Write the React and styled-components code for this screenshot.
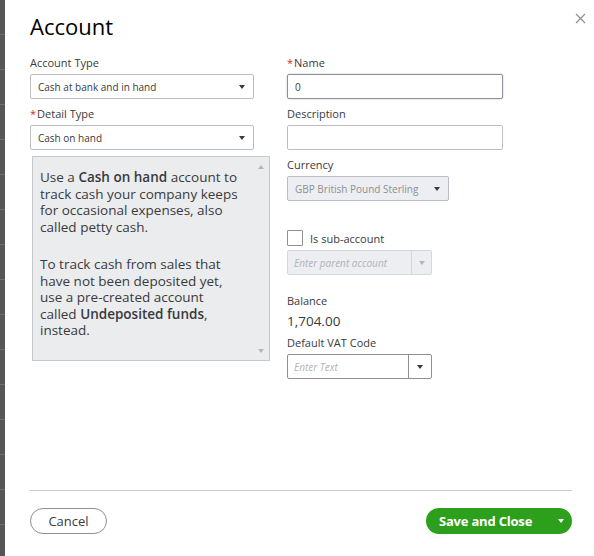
import React from "react";
import styled, { createGlobalStyle } from "styled-components";

const GlobalStyle = createGlobalStyle`
  html, body {
    margin: 0;
    padding: 0;
    background: #ffffff;
  }
  body {
    font-family: "Open Sans", "Noto Sans", Arial, sans-serif;
    color: #393a3d;
  }
`;

const Page = styled.div`
  display: flex;
  flex-direction: row;
  width: 594px;
  height: 556px;
  overflow: hidden;
`;

// dimmed list page peeking out behind the dialog
const Backdrop = styled.div`
  width: 5px;
  flex-shrink: 0;
  background-color: #565656;
  background-image: repeating-linear-gradient(
    to bottom,
    transparent 0,
    transparent 34px,
    #6e6e6e 34px,
    #6e6e6e 35px
  );
`;

const Dialog = styled.div`
  flex: 1;
  display: flex;
  flex-direction: column;
  padding: 10px 22px 22px 25px;
  background: #ffffff;
`;

const Header = styled.div`
  display: flex;
  justify-content: space-between;
  align-items: flex-start;
`;

const Title = styled.h1`
  margin: 0;
  font-size: 22px;
  line-height: 32px;
  font-weight: 400;
  color: #000000;
`;

const CloseButton = styled.button`
  border: none;
  background: none;
  padding: 0;
  margin: 1px -15px 0 0;
  width: 14px;
  height: 14px;
  display: flex;
  align-items: center;
  justify-content: center;
  cursor: pointer;
`;

const Form = styled.div`
  display: grid;
  grid-template-columns: 240px 216px;
  column-gap: 17px;
  margin-top: 13px;
`;

const Column = styled.div`
  display: flex;
  flex-direction: column;
`;

const Field = styled.div`
  display: flex;
  flex-direction: column;
  margin-top: ${(p) => p.$top ?? 0}px;
  margin-bottom: ${(p) => p.$gap ?? 7}px;
`;

const Label = styled.label`
  font-size: 11px;
  line-height: 15px;
  margin-bottom: 4px;
  color: #393a3d;
  font-weight: 400;
`;

const Required = styled.span`
  color: #d52b1e;
  margin-right: 1px;
`;

const SelectBox = styled.div`
  display: flex;
  align-items: center;
  justify-content: space-between;
  box-sizing: border-box;
  width: ${(p) => p.$width}px;
  height: 25px;
  padding: 0 8px 0 7px;
  border: 1px solid #babec5;
  border-radius: 2px;
  background: ${(p) => (p.$disabled ? "#eceef1" : "#ffffff")};
  color: ${(p) => (p.$disabled ? "#8d9096" : "#393a3d")};
  font-size: 10px;
`;

const TextInput = styled.div`
  box-sizing: border-box;
  width: 216px;
  height: 25px;
  padding: 0 7px;
  display: flex;
  align-items: center;
  border: 1px solid ${(p) => (p.$active ? "#8d9096" : "#babec5")};
  box-shadow: ${(p) => (p.$active ? "0 0 2px rgba(0,0,0,0.25)" : "none")};
  border-radius: 2px;
  font-size: 10px;
  color: #393a3d;
`;

const Caret = styled.span`
  width: 0;
  height: 0;
  border-left: 3px solid transparent;
  border-right: 3px solid transparent;
  border-top: 4px solid ${(p) => p.$color || "#393a3d"};
`;

const HelpBox = styled.div`
  display: flex;
  box-sizing: border-box;
  margin: 6px 0 0 2px;
  width: 238px;
  height: 205px;
  border: 1px solid #c6c8cc;
  background: #ebecee;
`;

const HelpText = styled.div`
  flex: 1;
  padding: 12px 12px 0 7px;
  font-size: 13.5px;
  line-height: 16.5px;
  color: #393a3d;

  p {
    margin: 0 0 21px;
  }
  b {
    font-weight: 600;
  }
`;

const ScrollTrack = styled.div`
  width: 16px;
  display: flex;
  flex-direction: column;
  justify-content: space-between;
  align-items: center;
  padding: 8px 0 7px;
`;

const ScrollArrow = styled.span`
  width: 0;
  height: 0;
  border-left: 3px solid transparent;
  border-right: 3px solid transparent;
  ${(p) =>
    p.$up
      ? "border-bottom: 4px solid #b4b6ba;"
      : "border-top: 4px solid #b4b6ba;"}
`;

const CheckRow = styled.div`
  display: flex;
  align-items: center;
  gap: 7px;
  margin: 29px 0 4px;
  font-size: 11px;
`;

const Checkbox = styled.span`
  box-sizing: border-box;
  width: 16px;
  height: 16px;
  border: 1px solid #8d9096;
  border-radius: 1px;
  background: #ffffff;
`;

const Combo = styled.div`
  display: flex;
  box-sizing: border-box;
  width: 145px;
  height: 25px;
  border: 1px solid ${(p) => (p.$disabled ? "#d4d7dc" : "#8d9096")};
  border-radius: 2px;
  background: ${(p) => (p.$disabled ? "#eceef1" : "#ffffff")};
`;

const ComboText = styled.div`
  flex: 1;
  display: flex;
  align-items: center;
  padding-left: 6px;
  font-size: 10px;
  font-style: italic;
  color: #b0b3b8;
`;

const ComboButton = styled.div`
  width: ${(p) => p.$width}px;
  display: flex;
  align-items: center;
  justify-content: center;
  border-left: 1px solid ${(p) => (p.$disabled ? "#d4d7dc" : "#8d9096")};
`;

const Value = styled.div`
  font-size: 13.5px;
  line-height: 18px;
  color: #393a3d;
  margin-bottom: 5px;
`;

const Spacer = styled.div`
  flex: 1;
`;

const Footer = styled.div`
  border-top: 1px solid #c9cbce;
  padding-top: 17px;
  display: flex;
  justify-content: space-between;
  align-items: center;
`;

const CancelButton = styled.button`
  box-sizing: border-box;
  height: 26px;
  width: 77px;
  border: 1px solid #8d9096;
  border-radius: 13px;
  background: #ffffff;
  font-family: inherit;
  font-size: 13px;
  color: #393a3d;
  padding: 0;
`;

const SplitButton = styled.div`
  display: flex;
  align-items: center;
  height: 26px;
  width: 146px;
  border-radius: 13px;
  background: #2ca01c;
  color: #ffffff;
`;

const SaveLabel = styled.span`
  flex: 1;
  padding-left: 13px;
  font-size: 13px;
  font-weight: 700;
  letter-spacing: -0.2px;
`;

const MenuToggle = styled.span`
  width: 22px;
  display: flex;
  justify-content: center;
`;

export default function App() {
  return (
    <>
      <GlobalStyle />
      <Page>
        <Backdrop />
        <Dialog>
          <Header>
            <Title>Account</Title>
            <CloseButton aria-label="Close">
              <svg width="11" height="11" viewBox="0 0 11 11">
                <path
                  d="M1 1 L10 10 M10 1 L1 10"
                  stroke="#8d9096"
                  strokeWidth="1.2"
                  fill="none"
                />
              </svg>
            </CloseButton>
          </Header>

          <Form>
            <Column>
              <Field>
                <Label>Account Type</Label>
                <SelectBox $width={224}>
                  Cash at bank and in hand
                  <Caret />
                </SelectBox>
              </Field>
              <Field $gap={0}>
                <Label>
                  <Required>*</Required>Detail Type
                </Label>
                <SelectBox $width={224}>
                  Cash on hand
                  <Caret />
                </SelectBox>
              </Field>
              <HelpBox>
                <HelpText>
                  <p>
                    Use a <b>Cash on hand</b> account to track cash your
                    company keeps for occasional expenses, also called petty
                    cash.
                  </p>
                  <p>
                    To track cash from sales that have not been deposited yet,
                    use a pre-created account called <b>Undeposited funds</b>,
                    instead.
                  </p>
                </HelpText>
                <ScrollTrack>
                  <ScrollArrow $up />
                  <ScrollArrow />
                </ScrollTrack>
              </HelpBox>
            </Column>

            <Column>
              <Field>
                <Label>
                  <Required>*</Required>Name
                </Label>
                <TextInput $active>0</TextInput>
              </Field>
              <Field>
                <Label>Description</Label>
                <TextInput />
              </Field>
              <Field $gap={0}>
                <Label>Currency</Label>
                <SelectBox $width={162} $disabled>
                  GBP British Pound Sterling
                  <Caret />
                </SelectBox>
              </Field>

              <CheckRow>
                <Checkbox />
                Is sub-account
              </CheckRow>
              <Combo $disabled>
                <ComboText>Enter parent account</ComboText>
                <ComboButton $width={19} $disabled>
                  <Caret $color="#b4b6ba" />
                </ComboButton>
              </Combo>

              <Field $gap={0} $top={18}>
                <Label>Balance</Label>
              </Field>
              <Value>1,704.00</Value>
              <Field $gap={0}>
                <Label>Default VAT Code</Label>
                <Combo>
                  <ComboText>Enter Text</ComboText>
                  <ComboButton $width={22}>
                    <Caret />
                  </ComboButton>
                </Combo>
              </Field>
            </Column>
          </Form>

          <Spacer />

          <Footer>
            <CancelButton>Cancel</CancelButton>
            <SplitButton>
              <SaveLabel>Save and Close</SaveLabel>
              <MenuToggle>
                <Caret $color="#ffffff" />
              </MenuToggle>
            </SplitButton>
          </Footer>
        </Dialog>
      </Page>
    </>
  );
}
